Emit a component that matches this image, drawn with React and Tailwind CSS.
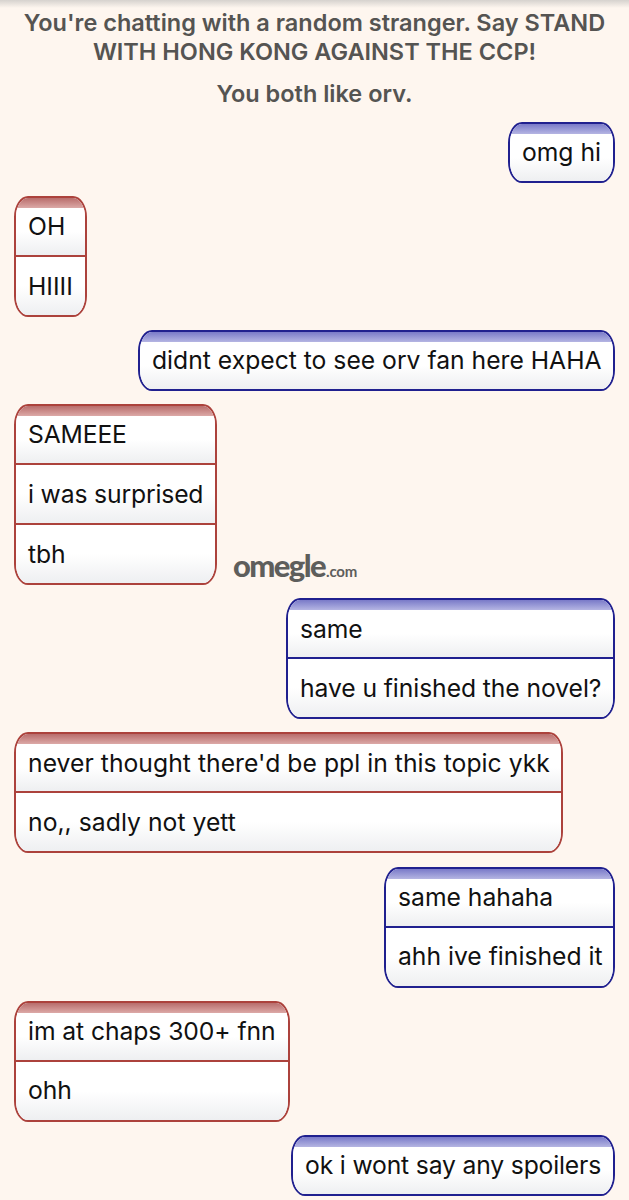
const MESSAGES = [
  { from: "you", lines: ["omg hi"] },
  { from: "them", lines: ["OH", "HIIII"] },
  { from: "you", lines: ["didnt expect to see orv fan here HAHA"], width: "w-[477px]" },
  { from: "them", lines: ["SAMEEE", "i was surprised", "tbh"], width: "w-[203px] tracking-[-0.15px]", logo: true },
  { from: "you", lines: ["same", "have u finished the novel?"], width: "w-[329px] tracking-[-0.08px]" },
  { from: "them", lines: ["never thought there'd be ppl in this topic ykk", "no,, sadly not yett"], width: "w-[549px] tracking-[0.04px]" },
  { from: "you", lines: ["same hahaha", "ahh ive finished it"], width: "w-[231px]" },
  { from: "them", lines: ["im at chaps 300+ fnn", "ohh"], width: "w-[276px] tracking-[-0.08px]" },
  { from: "you", lines: ["ok i wont say any spoilers"], width: "w-[324px] tracking-[-0.16px]" },
];

function Bubble({ from, lines, width = "" }) {
  const isYou = from === "you";
  const borderColor = isYou ? "border-[#20208f]" : "border-[#ac423c]";

  return (
    <div className={`overflow-hidden rounded-[14px/21px] border-2 bg-white ${borderColor} ${width}`}>
      <div
        className={`h-[10px] bg-gradient-to-b ${
          isYou ? "from-[#7a7ac8] to-[#b5b5e2]" : "from-[#b86d6c] to-[#dca9a7]"
        }`}
      />
      {lines.map((line, index) => (
        <div
          key={line}
          className={`flex items-center whitespace-nowrap bg-gradient-to-b from-white from-50% to-[#eeeff1] pl-[12px] pr-[12px] text-[24.7px] leading-none text-[#111111] ${
            index === 0 ? "h-[47px] pb-[10px]" : `h-[60px] border-t-2 ${borderColor}`
          }`}
        >
          {line}
        </div>
      ))}
    </div>
  );
}

export default function App() {
  return (
    <div className="h-[1200px] w-[629px] overflow-hidden bg-[#fef6ef] font-['Inter','Liberation_Sans',sans-serif]">
      <div className="h-[8px] bg-gradient-to-b from-[#d6d2ce] to-[#fef6ef]" />
      <div className="px-4 text-center text-[23.5px] font-semibold leading-[29px] text-[#555452]">
        <p>
          You're chatting with a random stranger. Say STAND
          <br />
          WITH HONG KONG AGAINST THE CCP!
        </p>
        <p className="mt-[13px]">You both like orv.</p>
      </div>
      <div className="mt-[14px] flex flex-col gap-[13.1px] px-[14px]">
        {MESSAGES.map((message) => (
          <div
            key={message.lines[0]}
            className={`flex items-end ${message.from === "you" ? "justify-end" : "justify-start"}`}
          >
            <Bubble from={message.from} lines={message.lines} width={message.width} />
            {message.logo && (
              <span className="mb-[4px] ml-[16px] font-['Lato',sans-serif] text-[31px] font-black leading-none tracking-[-1.6px] text-[#5e5e5c]">
                omegle
                <span className="ml-[1px] text-[15px] font-bold tracking-[-0.2px]">.com</span>
              </span>
            )}
          </div>
        ))}
      </div>
    </div>
  );
}
